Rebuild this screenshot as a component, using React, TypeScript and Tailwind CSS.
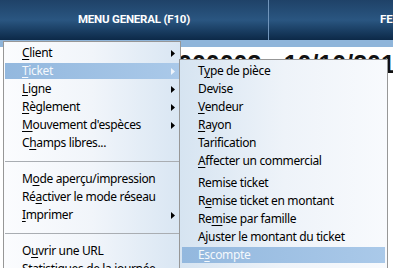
import type { ReactNode } from 'react';

type Item = {
  label: ReactNode;
  arrow?: boolean;
  active?: boolean;
  sep?: boolean;
  gap?: boolean;
};

const u = (s: string) => <u className="underline underline-offset-[2px] decoration-1">{s}</u>;

const mainItems: Item[] = [
  { label: <>{u('C')}lient</>, arrow: true },
  { label: <>{u('T')}icket</>, arrow: true, active: true },
  { label: <>{u('L')}igne</>, arrow: true },
  { label: <>{u('R')}èglement</>, arrow: true },
  { label: <>{u('M')}ouvement d'espèces</>, arrow: true },
  { label: <>C{u('h')}amps libres...</> },
  { label: null, sep: true },
  { label: <>M{u('o')}de aperçu/impression</> },
  { label: <>Ré{u('a')}ctiver le mode réseau</> },
  { label: <>{u('I')}mprimer</>, arrow: true },
  { label: null, sep: true },
  { label: <>O{u('u')}vrir une URL</> },
  { label: <>{u('S')}tatistiques de la journée</> },
];

const subItems: Item[] = [
  { label: <>T{u('y')}pe de pièce</> },
  { label: <>Devise</> },
  { label: <>{u('V')}endeur</> },
  { label: <>{u('R')}ayon</> },
  { label: <>Tarification</> },
  { label: <>{u('A')}ffecter un commercial</> },
  { label: <>Remise ticket</>, gap: true },
  { label: <>R{u('e')}mise ticket en montant</> },
  { label: <>Re{u('m')}ise par famille</> },
  { label: <>Ajuster le montant du ticket</> },
  { label: <>E{u('s')}compte</>, active: true },
];

function Arrow({ light }: { light?: boolean }) {
  return (
    <svg width="4" height="7" viewBox="0 0 4 7" className="shrink-0">
      <path d="M0 0 L4 3.5 L0 7 Z" fill={light ? '#eef4fb' : '#000'} />
    </svg>
  );
}

function MenuRow({ item, inset }: { item: Item; inset: string }) {
  if (item.sep) {
    return (
      <div className="h-[18px] pt-[9px] px-[1px]">
        <div className="h-[1px] bg-[#a9adb2]" />
      </div>
    );
  }
  return (
    <div className={`h-[18px] py-[1px] ${inset} ${item.gap ? 'mt-[4px]' : ''}`}>
      <div
        className={`h-[16px] flex items-center pr-[5px] ${
          item.active ? 'bg-gradient-to-r from-[#93b8de] to-[#aac9e9] text-[#f4f8fc]' : 'text-black'
        }`}
      >
        <span className="flex-1 whitespace-nowrap leading-none tracking-[-0.35px]">{item.label}</span>
        {item.arrow && <Arrow light={item.active} />}
      </div>
    </div>
  );
}

export default function App() {
  return (
    <div
      className="relative w-[393px] h-[268px] overflow-hidden bg-white"
      style={{ fontFamily: '"Noto Sans", sans-serif' }}
    >
      <header className="flex h-[40px] bg-gradient-to-b from-[#1f4268] via-[#2a5681] to-[#0c2948] text-white">
        <div className="w-[268px] flex items-center justify-center font-bold text-[11.5px] tracking-[-0.2px]" style={{ fontFamily: 'Roboto, sans-serif' }}>
          MENU GENERAL (F10)
        </div>
        <div className="w-[1px] bg-[#7195bb]" />
        <div className="flex-1 flex items-center pl-[111px] font-bold text-[11.5px] whitespace-nowrap overflow-hidden" style={{ fontFamily: 'Roboto, sans-serif' }}>
          FENETRES (F11)
        </div>
      </header>
      <div className="h-[7px] bg-[#8fb5da]" />
      <div className="flex">
        <div className="flex-1 pl-[178px] pt-[5px]">
          <div className="text-[25px] leading-none font-bold text-[#111] whitespace-nowrap" style={{ fontFamily: '"Liberation Sans", sans-serif' }}>
            000003 - 10/10/2016
          </div>
        </div>
        <div className="w-[6px] shrink-0 flex flex-col pt-[51px]">
          <div className="h-[79px] bg-[#3a86d6]" />
          <div className="h-[100px] bg-[#dcdfe3]" />
        </div>
      </div>

      <div className="absolute left-[3px] top-[41px] w-[178px] h-[240px] border border-[#979797] bg-gradient-to-r from-[#fbfcfe] via-[#f1f5fa] to-[#d9e6f3] pt-[2px] text-[12px]">
        {mainItems.map((item, i) => (
          <MenuRow key={i} item={item} inset="pl-[1px] pr-[0px] [&>div]:pl-[17px]" />
        ))}
      </div>

      <div className="absolute left-[179px] top-[59px] w-[209px] h-[230px] border border-[#979797] bg-gradient-to-r from-[#d6e4f1] via-[#eef3f9] to-[#f8fafd] pt-[2px] text-[12px]">
        {subItems.map((item, i) => (
          <MenuRow key={i} item={item} inset="px-[2px] [&>div]:pl-[16px]" />
        ))}
      </div>
    </div>
  );
}
